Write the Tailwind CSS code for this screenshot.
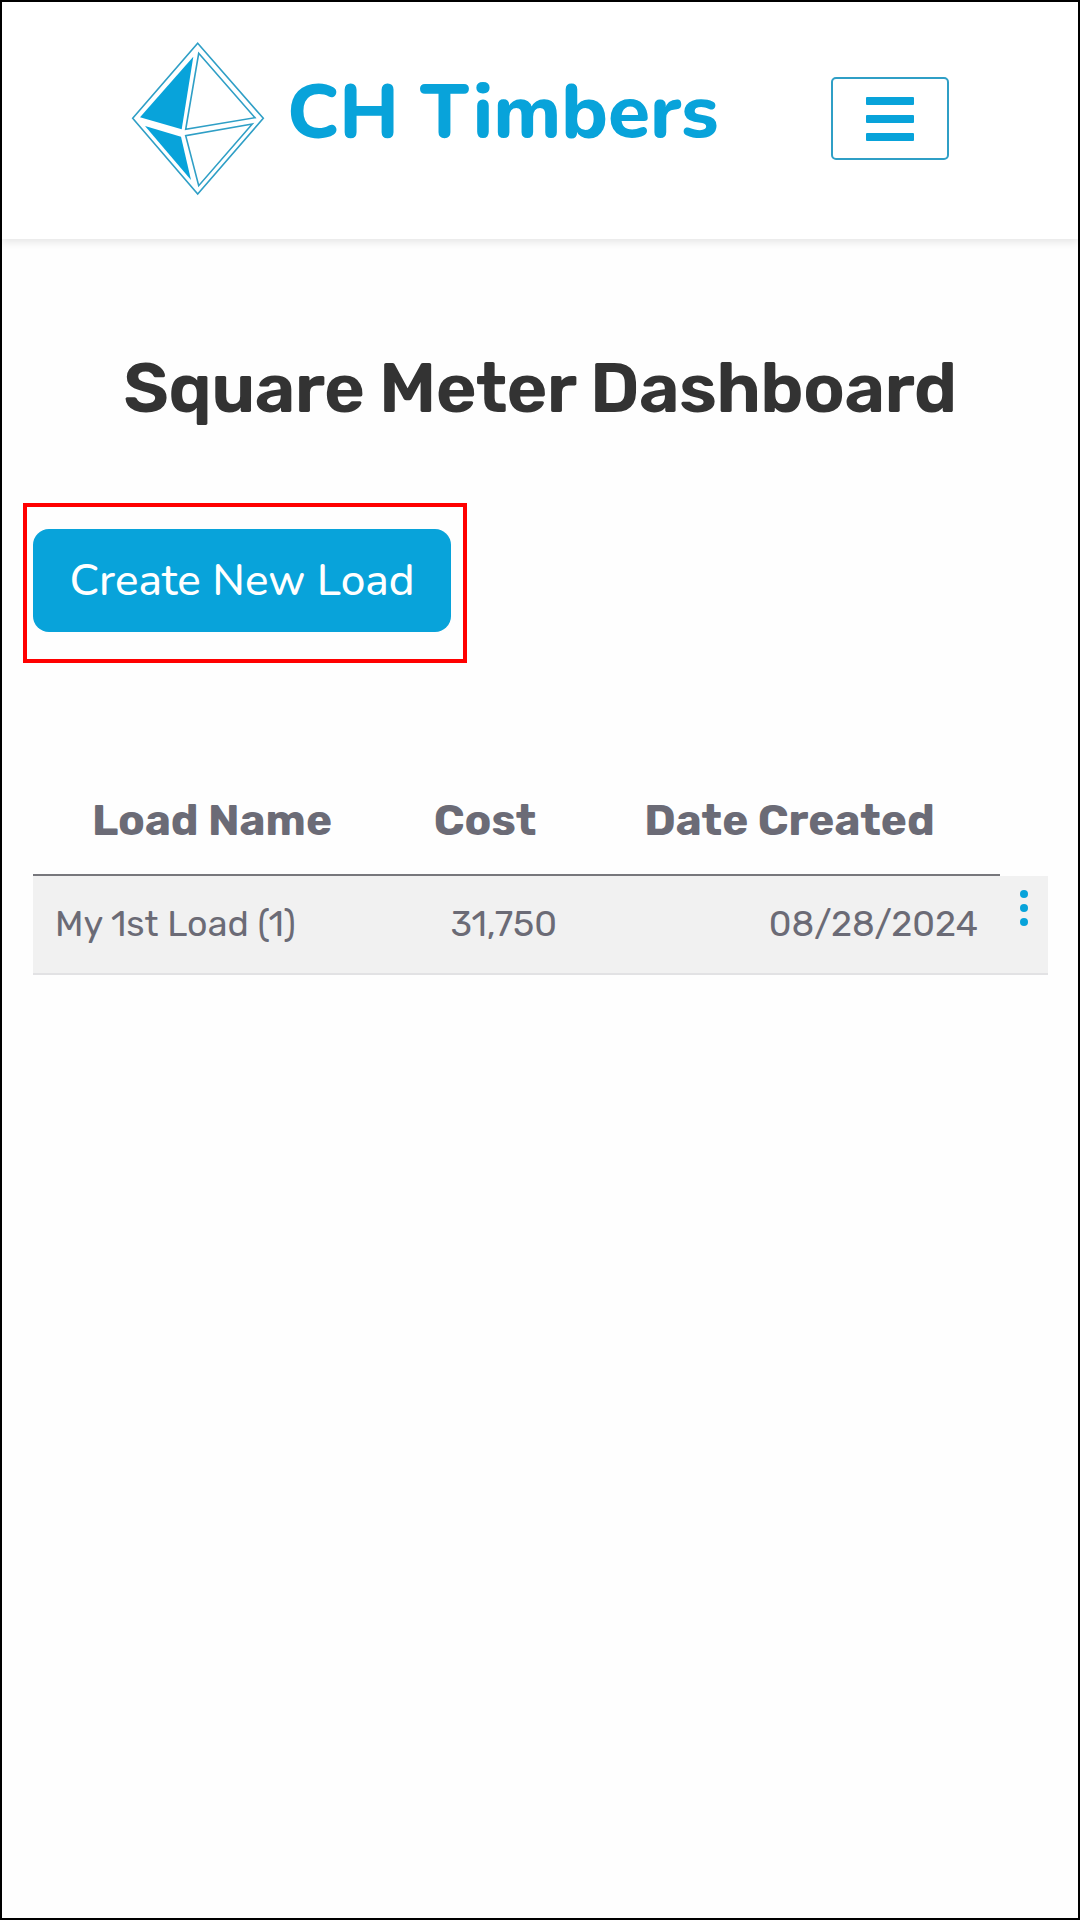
<!DOCTYPE html>
<html lang="en">
<head>
    <meta charset="UTF-8">
    <meta name="viewport" content="width=device-width, initial-scale=1.0">
    <title>Square Meter Dashboard</title>
    <script src="https://cdn.jsdelivr.net/npm/@tailwindcss/browser@4"></script>
</head>
<body class="bg-black">
    <div class="w-[1080px] h-[1920px] p-[2px]">
        <div class="w-full h-full bg-[#fefefe] overflow-hidden">
            <!-- Header -->
            <header class="h-[237px] bg-white shadow-[0_3px_8px_rgba(0,0,0,0.1)] flex items-start">
                <svg class="mt-[38px] ml-[128px] w-[136px] h-[156px]" viewBox="0 0 136 156">
                    <polygon points="67.7,3.3 133.3,78.3 67.7,154 2.7,78.3" fill="none" stroke="#2f9fc6" stroke-width="1.6"/>
                    <polygon points="63.3,16.7 51.7,89.3 10,77.3" fill="#08a3da"/>
                    <polygon points="15,86 51,96.7 61,140" fill="#08a3da"/>
                    <polygon points="68.7,13.3 125,77.7 55.7,89.3" fill="none" stroke="#2f9fc6" stroke-width="1.6"/>
                    <polygon points="122.3,84 55.7,95.7 68.7,145.7" fill="none" stroke="#2f9fc6" stroke-width="1.6"/>
                </svg>
                <span class="mt-[62px] ml-[21px] w-[544px] text-[#08a3da] text-[76.5px] leading-[96px] font-extrabold font-['Nunito','Lato',sans-serif]">CH Timbers</span>
                <button class="mt-[75px] w-[118px] h-[83px] border-2 border-[#2f9fc6] rounded-[5px] flex flex-col items-center justify-center gap-[10px]">
                    <span class="block w-[48px] h-[8px] bg-[#08a3da] rounded-[1px]"></span>
                    <span class="block w-[48px] h-[8px] bg-[#08a3da] rounded-[1px]"></span>
                    <span class="block w-[48px] h-[8px] bg-[#08a3da] rounded-[1px]"></span>
                </button>
            </header>

            <h1 class="mt-[110px] text-center text-[#333333] text-[70px] leading-[80px] font-semibold tracking-[-0.67px] font-['Rubik','Inter',sans-serif]">Square Meter Dashboard</h1>

            <!-- Button with highlight -->
            <div class="mt-[74px] ml-[21px] w-[444px] h-[160px] border-[4px] border-[#ff0000] pt-[22px] pl-[6px]">
                <button class="w-[418px] h-[103px] bg-[#08a3da] rounded-[16px] text-white text-[44px] font-medium font-['Nunito','Lato',sans-serif]">Create New Load</button>
            </div>

            <!-- Loads table -->
            <div class="mt-[112px] ml-[31px] w-[1015px] text-[#6b6b76] font-['Rubik','Inter',sans-serif]">
                <div class="flex w-[967px] h-[101px] border-b-2 border-[#77777c] text-[44px] font-bold items-center text-center pb-[9px]">
                    <div class="w-[358px]">Load Name</div>
                    <div class="w-[188px]">Cost</div>
                    <div class="w-[421px]">Date Created</div>
                </div>
                <div class="flex h-[99px] bg-[#f1f1f1] border-b-2 border-[#e2e2e4] text-[35.8px] items-center">
                    <div class="w-[358px] px-[22px]">My 1st Load (1)</div>
                    <div class="w-[188px] px-[22px] text-right">31,750</div>
                    <div class="w-[421px] px-[22px] text-right">08/28/2024</div>
                    <div class="w-[48px] self-start pt-[14px] flex flex-col items-center gap-[6px]">
                        <span class="block w-[8px] h-[8px] rounded-full bg-[#08a3da]"></span>
                        <span class="block w-[8px] h-[8px] rounded-full bg-[#08a3da]"></span>
                        <span class="block w-[8px] h-[8px] rounded-full bg-[#08a3da]"></span>
                    </div>
                </div>
            </div>
        </div>
    </div>
</body>
</html>
